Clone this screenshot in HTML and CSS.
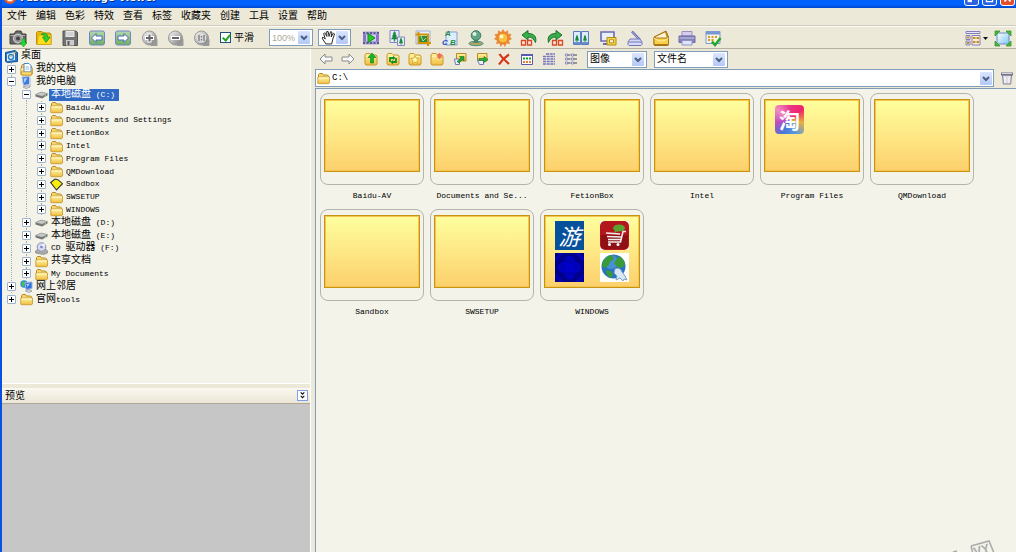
FILE: index.html
```html
<!DOCTYPE html>
<html lang="zh-CN">
<head>
    <meta charset="UTF-8">
    <meta name="viewport" content="width=device-width, initial-scale=1.0">
    <title>FastStone Image Viewer</title>
    <link rel="stylesheet" href="styles.css">
</head>
<body>
    <!-- shared icons -->
    <svg class="sprite" width="0" height="0" aria-hidden="true">
        <defs>
            <linearGradient id="gold" x1="0" y1="0" x2="0" y2="1"><stop offset="0" stop-color="#fff6a8"/><stop offset="1" stop-color="#f0bc3c"/></linearGradient>
            <linearGradient id="steel" x1="0" y1="0" x2="1" y2="1"><stop offset="0" stop-color="#fafafa"/><stop offset="1" stop-color="#777"/></linearGradient>
            <linearGradient id="sky" x1="0" y1="0" x2="1" y2="1"><stop offset="0" stop-color="#fff"/><stop offset="1" stop-color="#7cc8f4"/></linearGradient>
            <linearGradient id="leaf" x1="0" y1="0" x2="0" y2="1"><stop offset="0" stop-color="#b5d8b0"/><stop offset="1" stop-color="#6cae62"/></linearGradient>
        </defs>
        <symbol id="folder" viewBox="0 0 13 13">
            <path d="M1.500 10.500v-8l1-1h3l1 1.500h4l1 1v6.500z" fill="#f6d56c" stroke="#b98a24"/>
            <path d="M.8 11.500V5h11.700v6l-.8.7H1.500z" fill="url(#gold)" stroke="#c4952c" stroke-width=".8"/>
            <path d="M1.600 5.900H12" stroke="#fffbd8"/>
        </symbol>
        <symbol id="disk" viewBox="0 0 13 13">
            <path d="M.5 6.500 6 4l6.500 1.500v2L7 10.500.5 8.500z" fill="#737373"/>
            <path d="M.5 6.500 6 4l6.500 1.500L7 8.300z" fill="#c9c9c9" stroke="#888" stroke-width=".5"/>
            <path d="M9.500 8.300 11 7.600" stroke="#8f8"/>
        </symbol>
        <symbol id="chevron" viewBox="0 0 12 13">
            <path d="M3 5l3 3 3-3" fill="none" stroke="#4a6184" stroke-width="2"/>
        </symbol>
        <symbol id="tab-folder" viewBox="0 0 14 14">
            <path d="M1 12V3l1-1.500h4L7.500 3H12l1 1v8l-1 1H2z" fill="url(#gold)" stroke="#c9982c"/>
            <path d="M2 4.500h10" stroke="#fff3b0"/>
        </symbol>
        <symbol id="tree-pic" viewBox="0 0 8 12">
            <path d="M4 0 6 3H5l2 3H5.500L8 9H4.700v2.500H3.300V9H0l2.500-3H1l2-3H2z" fill="#1d8a3a"/>
        </symbol>
    </svg>

    <header class="titlebar">
        <svg class="app-icon" viewBox="0 0 12 12"><circle cx="6" cy="6" r="6" fill="#e05a28"/><circle cx="6" cy="6" r="3.500" fill="#fff"/><circle cx="6" cy="6" r="2" fill="#a03010"/></svg>
        <span class="app-title">FastStone Image Viewer</span>
        <span class="window-buttons">
            <button class="win-button" aria-label="最小化"><svg viewBox="0 0 15 15"><path d="M3 10.500h5" stroke="#fff" stroke-width="2.500"/></svg></button>
            <button class="win-button" aria-label="最大化"><svg viewBox="0 0 15 15"><path d="M4 3h7v8H4z" fill="none" stroke="#fff" stroke-width="1.500"/></svg></button>
            <button class="win-button close" aria-label="关闭"><svg viewBox="0 0 15 15"><path d="M4 3l7 8M11 3l-7 8" stroke="#fff" stroke-width="2"/></svg></button>
        </span>
    </header>

    <nav class="menubar">
        <button>文件</button>
        <button>编辑</button>
        <button>色彩</button>
        <button>特效</button>
        <button>查看</button>
        <button>标签</button>
        <button>收藏夹</button>
        <button>创建</button>
        <button>工具</button>
        <button>设置</button>
        <button>帮助</button>
    </nav>

    <div class="toolbar">
        <div class="group">
            <button class="tool" aria-label="获取照片"><svg viewBox="0 0 18 18"><path d="M1 5h4l2-3h5l1.500 3H17v10H1z" fill="#646464" stroke="#444"/><path d="M1.500 6.500H16" stroke="#aaa"/><circle cx="9" cy="9.500" r="4.500" fill="#999" stroke="#ddd"/><circle cx="9" cy="9.500" r="2" fill="#444"/><path d="M13 10h3v3.500h2L14.500 18 11 13.500h2z" fill="#1fdc2c" stroke="#169a20" stroke-width=".5"/></svg></button>
            <button class="tool" aria-label="打开"><svg viewBox="0 0 18 18"><path d="M1.500 15V3.500l1-1H7L8.500 4H15l1 1v10.500H2z" fill="#e9b90c" stroke="#b88d10"/><path d="M2 15.500 3.500 6H16v9.500z" fill="#ffdc1c" stroke="#d0a014" stroke-width=".7"/><path d="M6 5.500C9 3 12.500 4 12.500 8h2.700L11 13.500 7.500 8h2.300C10 6.500 8.500 5.500 6 5.500z" fill="#2fd12f" stroke="#148a1c" stroke-width=".7"/></svg></button>
            <button class="tool" aria-label="保存"><svg viewBox="0 0 18 18"><path d="M2 2h13l1.500 1.500V16.500H2z" fill="#737373" stroke="#555"/><path d="M4.500 2h9v6h-9z" fill="#e8e8e8"/><path d="M5.500 4h7M5.500 6h7" stroke="#bbb"/><path d="M5 11h8v5.500H5z" fill="#ccc"/><path d="M6.500 12h2v4h-2z" fill="#555"/></svg></button>
        </div>
        <div class="group">
            <button class="tool" aria-label="上一个"><svg viewBox="0 0 18 18"><rect x="1.500" y="2" width="15" height="14" rx="2" fill="url(#leaf)" stroke="#7284c8"/><path d="M3.500 9 8 4.500V7h6v4H8v2.500z" fill="#fff" stroke="#4a68b4"/></svg></button>
            <button class="tool" aria-label="下一个"><svg viewBox="0 0 18 18"><rect x="1.500" y="2" width="15" height="14" rx="2" fill="url(#leaf)" stroke="#7284c8"/><path d="M14.500 9 10 4.500V7H4v4h6v2.500z" fill="#fff" stroke="#4a68b4"/></svg></button>
        </div>
        <div class="group">
            <button class="tool" aria-label="放大"><svg viewBox="0 0 18 18"><path d="M10 16.500 16 10.500v6z" fill="#999" stroke="#999"/><circle cx="8.500" cy="9" r="7" fill="url(#steel)" stroke="#999"/><path d="M4 9h9M8.500 4.500v9" stroke="#fff" stroke-width="4"/><path d="M5 9h7M8.500 5.500v7" stroke="#666" stroke-width="2"/></svg></button>
            <button class="tool" aria-label="缩小"><svg viewBox="0 0 18 18"><path d="M10 16.500 16 10.500v6z" fill="#999" stroke="#999"/><circle cx="8.500" cy="9" r="7" fill="url(#steel)" stroke="#999"/><path d="M4 9h9" stroke="#fff" stroke-width="4"/><path d="M5 9h7" stroke="#666" stroke-width="2"/></svg></button>
            <button class="tool" aria-label="实际大小"><svg viewBox="0 0 18 18"><path d="M10 16.500 16 10.500v6z" fill="#999" stroke="#999"/><circle cx="8.500" cy="9" r="7" fill="url(#steel)" stroke="#999"/><circle cx="8.500" cy="9" r="4.800" fill="#ddd"/><path d="M6 6v6M11 6v6M8.500 7v1.500M8.500 10v1.500" stroke="#777" stroke-width="1.300"/></svg></button>
        </div>
        <label class="check"><input type="checkbox" checked>平滑</label>
        <div class="combo zoom">
            <select aria-label="缩放" disabled><option>100%</option></select>
            <svg class="arrow"><use href="#chevron"/></svg>
        </div>
        <button class="combo hand" aria-label="手形工具" aria-haspopup="menu">
            <svg class="hand-icon" viewBox="0 0 14 14"><path d="M4.500 13 1 7.500l1-1L4 8.500 2.500 3.500l1-1L5.500 6 5.300 1.500h1.400L7.500 6 9 1.500l1.200.5L9.500 6.500l2-3.500 1.200.7L11 8.500 10 13z" fill="#fff" stroke="#222" stroke-width=".9"/></svg>
            <svg class="arrow"><use href="#chevron"/></svg>
        </button>
        <div class="group first-action">
            <button class="tool" aria-label="幻灯片"><svg viewBox="0 0 18 18"><path d="M1 2.500h16v13H1z" fill="#a9a4dc"/><path d="M1 4h16M1 14h16" stroke="#5d5894" stroke-width="2" stroke-dasharray="2 1.500"/><path d="M1 6h16v6H1z" fill="#c6d2f0"/><path d="M1 5.500h3v7H1zM14 5.500h3v7h-3z" fill="#8e70c4"/><path d="M6 4.500 13 9l-7 4.500z" fill="#25c825" stroke="#188a20"/></svg></button>
            <button class="tool" aria-label="调整大小"><svg viewBox="0 0 18 18"><path d="M2 1.500h9v12H2z" fill="#e9eefc" stroke="#8585c8"/><use href="#tree-pic" x="2.500" y="2" width="8" height="11"/><path d="M9.500 8h7v8.500h-7z" fill="#e9eefc" stroke="#8585c8"/><use href="#tree-pic" x="10" y="8.500" width="6" height="7.500"/></svg></button>
            <button class="tool" aria-label="裁剪"><svg viewBox="0 0 18 18"><path d="M2 2h14v13H2z" fill="#e7edfc" stroke="#a7acd8"/><path d="M5 7h8v6H5z" fill="#2d8b38"/><path d="M7 7l2 5 3-3" stroke="#a6dfb0" fill="none"/><path d="M1.500 5.500H14V17M4.500 3v11H17" fill="none" stroke="#d09600" stroke-width="2"/></svg></button>
        </div>
        <div class="group">
            <button class="tool" aria-label="标注"><svg viewBox="0 0 18 18"><path d="M5 3h11v13H5z" fill="#dceefc" stroke="#8c9bd0"/><text class="glyph green" x="4" y="7">A</text><text class="glyph blue" x="1" y="16">C</text><text class="glyph green" x="9" y="16">B</text></svg></button>
            <button class="tool" aria-label="克隆"><svg viewBox="0 0 18 18"><ellipse cx="9" cy="14.500" rx="7" ry="2.200" fill="#b9a45c" stroke="#3c8f84"/><path d="M7.500 10h3l1.500 4H6z" fill="#438972"/><circle cx="9" cy="6.500" r="4.800" fill="#61a585" stroke="#397a64"/><circle cx="7.500" cy="5" r="2" fill="#dcefe5"/></svg></button>
        </div>
        <div class="group">
            <button class="tool" aria-label="亮度"><svg viewBox="0 0 18 18"><path d="M9 0l2 3 3-1.700.2 3.500 3.300.2L16 8l2 2-3 1.500 1 3.500-3.500-.5L11 18l-2-3-2.500 3-1-3.500L2 15l1-3.500L0 10l2-2L.5 5l3.300-.2L4 1.300 7 3z" fill="#ee8a3c"/><circle cx="9" cy="9" r="5" fill="#f9c03c" stroke="#dd8228"/><circle cx="7.500" cy="7.500" r="2" fill="#fff6c4"/></svg></button>
            <button class="tool" aria-label="向左旋转"><svg viewBox="0 0 18 18"><path d="M2 6l6-4.500v3c6 0 9 3 7.500 9C14 10 12 8 8 8v3z" fill="#38ad48" stroke="#177531"/><path d="M1.500 11.500h4v4.500h-4zM7.500 11.500h4v4.500h-4z" fill="#ffe5d5" stroke="#d64a25" stroke-width="1.300"/></svg></button>
            <button class="tool" aria-label="向右旋转"><svg viewBox="0 0 18 18"><path d="M16 6l-6-4.500v3c-6 0-9 3-7.500 9C4 10 6 8 10 8v3z" fill="#38ad48" stroke="#177531"/><path d="M6.500 11.500h4v4.500h-4zM12.500 11.500h4v4.500h-4z" fill="#ffe5d5" stroke="#d64a25" stroke-width="1.300"/></svg></button>
            <button class="tool" aria-label="比较"><svg viewBox="0 0 18 18"><path d="M1.500 2.500h7v13h-7zM9.500 2.500h7v13h-7z" fill="#dcecfc" stroke="#587cc0"/><path d="M2 13h6v2H2zM10 13h6v2h-6z" fill="#6d90cc"/><use href="#tree-pic" x="2.500" y="5" width="5" height="9"/><use href="#tree-pic" x="10.500" y="5" width="5" height="9"/></svg></button>
        </div>
        <div class="group">
            <button class="tool" aria-label="设为墙纸"><svg viewBox="0 0 18 18"><path d="M2 3h13v9H2z" fill="#e7f0fa" stroke="#6b69b4" stroke-width="1.600"/><path d="M4 15h7" stroke="#6b69b4" stroke-width="2"/><path d="M8 8.500h9v7.500H8z" fill="#f4d64e" stroke="#b58c0d"/><path d="M10.500 10.800h4v3h-4z" fill="#fff" stroke="#b58c0d"/></svg></button>
        </div>
        <div class="group">
            <button class="tool" aria-label="扫描"><svg viewBox="0 0 18 18"><path d="M6 2.500 14 11" stroke="#5e62ae" stroke-width="2.500"/><path d="M6.500 3 14 11" stroke="#b4b9ee"/><path d="M4 10h10l2 3v2.500l-1 1H3l-1-1V13z" fill="#d6d9f8" stroke="#7078b8"/><path d="M2.500 13h13" stroke="#7078b8"/></svg></button>
            <button class="tool" aria-label="电子邮件"><svg viewBox="0 0 18 18"><path d="M2 8 14 2l2.500 6v8l-1 .5H3L2 16z" fill="#c88d18" stroke="#a87012"/><path d="M3.500 8 13 3.500 15 9H4z" fill="#fff6d8"/><path d="M2 9h14.500v6.500H2z" fill="#f7cf48" stroke="#ad7915"/><path d="M2 9c5 4 10 4 14.500 0" fill="none" stroke="#fff0a5"/></svg></button>
            <button class="tool" aria-label="打印"><svg viewBox="0 0 18 18"><path d="M4 7V2.500h10V7z" fill="#d9ccee" stroke="#9a8fbe"/><path d="M1 7h16v6.500H1z" fill="#8584b8" stroke="#6c6aa4"/><path d="M1.500 9h15" stroke="#c7c8ec"/><path d="M4 11.500h10v4.500H4z" fill="#d7e8fb" stroke="#9c8bc8"/></svg></button>
            <button class="tool" aria-label="设置"><svg viewBox="0 0 18 18"><path d="M2 2.500h14v12H2z" fill="#f5f4e4" stroke="#7d9ad0"/><path d="M2 4h14" stroke="#7897d4" stroke-width="3"/><path d="M4 8h10M4 11h6" stroke="#d39b2a" stroke-width="2" stroke-dasharray="2 1.500"/><path d="M8 12.500l3 3.500L16.500 9" fill="none" stroke="#22a52a" stroke-width="2.500"/></svg></button>
        </div>
        <div class="group window-tools">
            <button class="tool wide" aria-label="布局"><svg viewBox="0 0 24 18"><path d="M2 2.500h14v2H2z" fill="#e5e8ff" stroke="#8382bf"/><path d="M2 6.500h4v4H2zM2 12h4v4H2zM8 6.500h8V16H8z" fill="#f4edd2" stroke="#8382bf"/><path d="M3 8.500h2M3 14h2M9 9h2.500M12.500 9H15M9 13h2.500M12.500 13H15" stroke="#cb8d22" stroke-width="2"/><path d="M19 8h5l-2.500 3z" fill="#111"/></svg></button>
            <button class="tool" aria-label="全屏"><svg viewBox="0 0 18 18"><path d="M3 4h12v11H3z" fill="url(#sky)" stroke="#668dc2"/><path d="M1 2h5L1 7zM17 2v5l-5-5zM1 17v-5l5 5zM17 17h-5l5-5z" fill="#49bd35" stroke="#2b8a23" stroke-width=".7"/></svg></button>
        </div>
    </div>

    <main class="workspace">
        <aside class="sidebar">
            <ul class="tree">
                <li class="root"><svg class="icon" viewBox="0 0 13 13"><path d="M.5 2.500 10 .5l2.500 2v9l-10 1-2-1z" fill="#2474c4" stroke="#175694"/><path d="M2 4l8-2v8l-8 1z" fill="#e9f6ff"/><circle cx="6" cy="7" r="2.500" fill="none" stroke="#2b83cc" stroke-width="1.400"/><path d="M5.500 7l6-6" stroke="#d3902d"/></svg><span class="label cn">桌面</span></li>
                <li><button class="toggle plus" aria-label="展开"></button><svg class="icon" viewBox="0 0 13 13"><use href="#folder" width="13" height="13"/><path d="M4 .5h5l2 2V9H4z" fill="#fff" stroke="#4d86cc"/><path d="M5.500 4H9M5.500 6H9" stroke="#8ab6e6"/><path d="M1 9h11l-.7 3.300H2z" fill="url(#gold)" stroke="#c4952c" stroke-width=".8"/></svg><span class="label cn">我的文档</span></li>
                <li><button class="toggle" aria-label="折叠"></button><svg class="icon" viewBox="0 0 13 13"><path d="M2 1 9.500.5 10 8 3.500 9.500z" fill="#3678e8" stroke="#b8bfcc"/><path d="M3.500 2.500l4-.5-3 5z" fill="#a8d3ff"/><path d="M9 1l2 .5v9l-2 1.500z" fill="#cdd0d8"/><path d="M3 11l5-1.500 2 1.500-4 1.500z" fill="#dde0e6" stroke="#7c828e" stroke-width=".6"/></svg><span class="label cn">我的电脑</span></li>
                <li class="level2"><button class="toggle" aria-label="折叠"></button><svg class="icon"><use href="#disk"/></svg><span class="label selected"><span class="cn">本地磁盘</span> (C:)</span></li>
                <li class="level3"><button class="toggle plus" aria-label="展开"></button><svg class="icon"><use href="#folder"/></svg><span class="label">Baidu-AV</span></li>
                <li class="level3"><button class="toggle plus" aria-label="展开"></button><svg class="icon"><use href="#folder"/></svg><span class="label">Documents and Settings</span></li>
                <li class="level3"><button class="toggle plus" aria-label="展开"></button><svg class="icon"><use href="#folder"/></svg><span class="label">FetionBox</span></li>
                <li class="level3"><button class="toggle plus" aria-label="展开"></button><svg class="icon"><use href="#folder"/></svg><span class="label">Intel</span></li>
                <li class="level3"><button class="toggle plus" aria-label="展开"></button><svg class="icon"><use href="#folder"/></svg><span class="label">Program Files</span></li>
                <li class="level3"><button class="toggle plus" aria-label="展开"></button><svg class="icon"><use href="#folder"/></svg><span class="label">QMDownload</span></li>
                <li class="level3"><button class="toggle plus" aria-label="展开"></button><svg class="icon" viewBox="0 0 13 13"><path d="M.7 4.500 5 1l3 .7 4.500 4L6.500 12z" fill="#f8ee0c" stroke="#333" stroke-width="1.100"/></svg><span class="label">Sandbox</span></li>
                <li class="level3"><button class="toggle plus" aria-label="展开"></button><svg class="icon"><use href="#folder"/></svg><span class="label">SWSETUP</span></li>
                <li class="level3"><button class="toggle plus" aria-label="展开"></button><svg class="icon"><use href="#folder"/></svg><span class="label">WINDOWS</span></li>
                <li class="level2"><button class="toggle plus" aria-label="展开"></button><svg class="icon"><use href="#disk"/></svg><span class="label"><span class="cn">本地磁盘</span> (D:)</span></li>
                <li class="level2"><button class="toggle plus" aria-label="展开"></button><svg class="icon"><use href="#disk"/></svg><span class="label"><span class="cn">本地磁盘</span> (E:)</span></li>
                <li class="level2"><button class="toggle plus" aria-label="展开"></button><svg class="icon" viewBox="0 0 13 13"><path d="M.5 9l3-2h7l2 2v2l-4 1.500-8-1.500z" fill="#aaa" stroke="#777" stroke-width=".6"/><circle cx="6.500" cy="5" r="4.300" fill="#d7dcf4" stroke="#8b8fae"/><path d="M6.500 5 9.500 2" stroke="#fff" stroke-width="1.500"/><circle cx="6.500" cy="5" r="1.300" fill="#7983b8"/></svg><span class="label">CD <span class="cn">驱动器</span> (F:)</span></li>
                <li class="level2"><button class="toggle plus" aria-label="展开"></button><svg class="icon"><use href="#folder"/></svg><span class="label cn">共享文档</span></li>
                <li class="level2"><button class="toggle plus" aria-label="展开"></button><svg class="icon"><use href="#folder"/></svg><span class="label">My Documents</span></li>
                <li><button class="toggle plus" aria-label="展开"></button><svg class="icon" viewBox="0 0 13 13"><circle cx="4" cy="4" r="3.700" fill="#2f8ed4"/><path d="M1 3l3-2 1 3-2 3z" fill="#4bbf4f"/><path d="M5 2.500 12 2v6.500l-6 1z" fill="#2e6ee0" stroke="#9fb4d8"/><path d="M6.500 4 10 3.500 7.500 7z" fill="#a9d5ff"/><path d="M5.500 11 9 9.500l3 1.500-3 1.500z" fill="#d5d8e2" stroke="#7c828e" stroke-width=".6"/></svg><span class="label cn">网上邻居</span></li>
                <li class="last"><button class="toggle plus" aria-label="展开"></button><svg class="icon"><use href="#folder"/></svg><span class="label"><span class="cn">官网</span>tools</span></li>
            </ul>
            <section class="preview">
                <div class="preview-header">
                    <h2>预览</h2>
                    <button class="collapse" aria-label="隐藏预览"><svg viewBox="0 0 10 10"><path d="M3 1.500l2 2 2-2M3 5.500l2 2 2-2" fill="none" stroke="#111" stroke-width="1.300"/></svg></button>
                </div>
                <div class="preview-area"></div>
            </section>
        </aside>

        <section class="browser">
            <div class="browser-toolbar">
                <div class="small-group">
                    <button class="small-tool" aria-label="后退"><svg viewBox="0 0 14 14"><path d="M1 7 6 2V5h7v4H6v3z" fill="#f8f8f8" stroke="#8c8c8c"/></svg></button>
                    <button class="small-tool" aria-label="前进"><svg viewBox="0 0 14 14"><path d="M13 7 8 2V5H1v4h7v3z" fill="#f8f8f8" stroke="#8c8c8c"/></svg></button>
                </div>
                <div class="small-group">
                    <button class="small-tool" aria-label="向上"><svg viewBox="0 0 14 14"><use href="#tab-folder"/><path d="M8 1l4 4.500H9.500V11h-3V5.500H4z" fill="#18b526" stroke="#0c7f1a" stroke-width=".6"/></svg></button>
                    <button class="small-tool" aria-label="刷新"><svg viewBox="0 0 14 14"><use href="#tab-folder"/><path d="M4 10V6h4M10 6v4H6" fill="none" stroke="#188f2a" stroke-width="1.800"/><path d="M7 3.500 9.500 6 7 8zM7 8v4.500L4.500 10z" fill="#188f2a"/></svg></button>
                    <button class="small-tool" aria-label="收藏"><svg viewBox="0 0 14 14"><use href="#tab-folder"/><path d="M7 3.500l1.200 2.700 2.800.3-2 2 .6 3L7 10l-2.600 1.500.6-3-2-2 2.800-.3z" fill="#fffcb0" stroke="#cf9d1d" stroke-width=".8"/></svg></button>
                    <button class="small-tool" aria-label="新建文件夹"><svg viewBox="0 0 14 14"><use href="#tab-folder"/><path d="M9.500 1v6M6.500 4h6M7.500 2l4 4M11.500 2l-4 4" stroke="#f06a50" stroke-width="1.100"/></svg></button>
                </div>
                <div class="small-group">
                    <button class="small-tool" aria-label="复制到"><svg viewBox="0 0 14 14"><path d="M3.500 1.500h9.500V9H3.500z" fill="url(#gold)" stroke="#b98a24"/><path d="M1.500 7h5v5.500h-4z" fill="#eef0ff" stroke="#7375b6"/><path d="M4 9.500 8 6 6.500 4.500H11V9L9.500 7.500 6 11z" fill="#24a532" stroke="#12701e" stroke-width=".6"/></svg></button>
                    <button class="small-tool" aria-label="移动到"><svg viewBox="0 0 14 14"><path d="M2.500 1.500H12V9H2.500z" fill="url(#gold)" stroke="#b98a24"/><path d="M2.500 8h6v4.500h-4z" fill="#eef0ff" stroke="#7375b6"/><path d="M4 6.500h5v-2L13 7.500 9 10.500v-2H4z" fill="#24b532" stroke="#12701e" stroke-width=".6"/></svg></button>
                    <button class="small-tool" aria-label="删除"><svg viewBox="0 0 14 14"><path d="M2.500 2c2 3 5 6 9.500 10M12 2.500C8 5 5 8 2 12.500" fill="none" stroke="#d53418" stroke-width="2.200"/></svg></button>
                </div>
                <div class="small-group">
                    <button class="small-tool" aria-label="缩略图"><svg viewBox="0 0 14 14"><path d="M1.500 2.500h11v10h-11z" fill="#fff" stroke="#5d5bb0"/><path d="M1 3h12" stroke="#5d5bb0" stroke-width="2"/><path d="M3 6.500h8.500" stroke="#159b2c" stroke-width="2" stroke-dasharray="2 1"/><path d="M3 10h8.500" stroke="#f27b2c" stroke-width="2" stroke-dasharray="2 1"/></svg></button>
                    <button class="small-tool" aria-label="详细信息"><svg viewBox="0 0 14 14"><path d="M4 2h9M1 4.500h12M1 7h12M1 9.500h12M1 12h12" stroke="#7472bd" stroke-width="1.300" stroke-dasharray="3 .7"/></svg></button>
                    <button class="small-tool" aria-label="列表"><svg viewBox="0 0 14 14"><path d="M4 3h2.500M10 3h3M4 7h2.500M10 7h3M4 11h2.500M10 11h3" stroke="#444"/><path d="M1.500 2h2v2h-2zM7.500 2h2v2h-2zM1.500 6h2v2h-2zM7.500 6h2v2h-2zM1.500 10h2v2h-2zM7.500 10h2v2h-2z" fill="#fff" stroke="#7472bd" stroke-width=".8"/></svg></button>
                </div>
                <div class="combo filter">
                    <select aria-label="文件类型"><option>图像</option></select>
                    <svg class="arrow"><use href="#chevron"/></svg>
                </div>
                <div class="combo sort">
                    <select aria-label="排序方式"><option>文件名</option></select>
                    <svg class="arrow"><use href="#chevron"/></svg>
                </div>
            </div>

            <div class="address-row">
                <div class="address">
                    <svg class="icon"><use href="#folder"/></svg>
                    <input type="text" value="C:\" aria-label="地址">
                    <button class="address-drop" aria-label="历史"><svg class="arrow"><use href="#chevron"/></svg></button>
                </div>
                <button class="trash" aria-label="回收站"><svg viewBox="0 0 14 14"><path d="M2.500 4l.8 9h7.400l.8-9z" fill="#dddbe6" stroke="#84809c"/><path d="M5 5.500V12M9 5.500V12" stroke="#fff"/><path d="M1 1.500h12v3H1z" fill="#77738a"/><path d="M2 2.500h10" stroke="#d8d6e6"/></svg></button>
            </div>

            <div class="files">
                <figure class="file"><div class="card"><div class="thumb"></div></div><figcaption>Baidu-AV</figcaption></figure>
                <figure class="file"><div class="card"><div class="thumb"></div></div><figcaption>Documents and Se...</figcaption></figure>
                <figure class="file"><div class="card"><div class="thumb"></div></div><figcaption>FetionBox</figcaption></figure>
                <figure class="file"><div class="card"><div class="thumb"></div></div><figcaption>Intel</figcaption></figure>
                <figure class="file">
                    <div class="card"><div class="thumb"><span class="pic taobao">淘</span></div></div>
                    <figcaption>Program Files</figcaption>
                </figure>
                <figure class="file"><div class="card"><div class="thumb"></div></div><figcaption>QMDownload</figcaption></figure>
                <figure class="file"><div class="card"><div class="thumb"></div></div><figcaption>Sandbox</figcaption></figure>
                <figure class="file"><div class="card"><div class="thumb"></div></div><figcaption>SWSETUP</figcaption></figure>
                <figure class="file">
                    <div class="card"><div class="thumb">
                        <span class="pic game">游</span>
                        <svg class="pic" viewBox="0 0 29 29"><path d="M0 0h29v29H0z" fill="#fff"/><rect width="29" height="29" rx="5" fill="#b3161c"/><path d="M1 14h27v10q0 4-4 4H5q-4 0-4-4z" fill="#8f1015"/><ellipse cx="19" cy="7" rx="6" ry="3.500" fill="#58a530"/><path d="M15 9l-1 3 4-2z" fill="#58a530"/><path d="M6 12l14 1M7 15.500l14 .5M8 18.500h13M26 10.500h-3L20.500 21H8" fill="none" stroke="#eee" stroke-width="1.600"/><circle cx="9.500" cy="23.500" r="1.500" fill="#fff"/><circle cx="18" cy="23.500" r="1.500" fill="#fff"/></svg>
                        <svg class="pic" viewBox="0 0 29 29"><path d="M0 0h29v29H0z" fill="#00008a"/><g fill="#0000b4" stroke="#0000e0"><circle cx="14.500" cy="8" r="4.500"/><circle cx="14.500" cy="21" r="4.500"/><circle cx="8" cy="14.500" r="4.500"/><circle cx="21" cy="14.500" r="4.500"/><circle cx="14.500" cy="14.500" r="3.500"/></g><path d="M0 7 7 0M22 0l7 7M0 22l7 7M29 22l-7 7M14.500 12v5M12 14.500h5" stroke="#0000d4" stroke-width="1.500"/></svg>
                        <svg class="pic" viewBox="0 0 29 29"><path d="M0 0h29v29H0z" fill="#fff"/><circle cx="13.500" cy="13.500" r="12" fill="#2874c2"/><circle cx="11" cy="9" r="7" fill="#5ba3e0" opacity=".6"/><path d="M3 8c3-4 6-6 9-6l2 4-4 3-2 4-4 2-2-2zM14 10l5-7c4 2 6 6 6 9l-4 3-4-1zM6 17l5 1 2 4-2 3c-3-1-5-4-5-8z" fill="#3b9b38"/><path d="M15 16c3-2 6 0 7 3l3 4 2 4-3-1-1 2-3-3-4 2 1-4-3-3z" fill="#d9e8f6" stroke="#7f9fc2"/></svg>
                    </div></div>
                    <figcaption>WINDOWS</figcaption>
                </figure>
            </div>
            <svg class="stamp" viewBox="0 0 46 12"><path d="M1 12l4-1M19 6l18-5 5 12M19 6l2 8" fill="none" stroke="#aaa" stroke-width="1.500"/><text x="23" y="16" transform="rotate(-17 23 16)">VY</text></svg>
        </section>
    </main>
</body>
</html>
```

FILE: styles.css
```css
* {
    box-sizing: border-box;
}
body {
    margin: 0;
    height: 100vh;
    display: flex;
    flex-direction: column;
    overflow: hidden;
    border-left: 2px solid #0a50e0;
    background-color: #ece9d8;
    color: #000;
    font-family: "Liberation Sans", "Noto Sans CJK SC", sans-serif;
    font-size: 10px;
    line-height: 12px;
}
button, select, input {
    font: inherit;
    color: inherit;
}
button {
    padding: 0;
    border: none;
    background: none;
}
svg {
    display: block;
    flex-shrink: 0;
}
.sprite {
    position: absolute;
}

/* ---------- title bar ---------- */
.titlebar {
    display: flex;
    align-items: flex-end;
    flex-shrink: 0;
    height: 8px;
    padding: 0 1px 4px 2px;
    overflow: hidden;
    background: linear-gradient(#0061fc 60%, #0046c8);
    color: #fff;
}
.app-icon {
    width: 12px;
    height: 12px;
}
.app-title {
    padding-left: 4px;
    font-family: "DejaVu Sans", sans-serif;
    font-size: 10px;
    font-weight: bold;
    line-height: 12px;
    text-shadow: 1px 1px #0a2a80;
}
.window-buttons {
    display: flex;
    gap: 3px;
    margin-left: auto;
    margin-bottom: -2px;
}
.win-button {
    width: 15px;
    height: 15px;
    border: 1px solid #fff;
    border-radius: 3px;
    background-color: #2a62e0;
}
.close {
    background-color: #e0502c;
}

/* ---------- menu and toolbar ---------- */
.menubar {
    display: flex;
    flex-shrink: 0;
    gap: 9px;
    height: 18px;
    padding: 0 5px 1px;
    border-bottom: 1px solid #cfccbe;
}
.toolbar {
    display: flex;
    align-items: center;
    flex-shrink: 0;
    gap: 9px;
    height: 23px;
    padding: 0 4px 0 7px;
    border-top: 1px solid #fbfaf5;
    border-bottom: 1px solid #b4b1a2;
}
.group {
    display: flex;
    gap: 8px;
}
.tool {
    width: 18px;
    height: 18px;
}
.wide {
    width: 24px;
}
.tool svg, .small-tool svg {
    width: 100%;
    height: 100%;
}
.glyph {
    font-size: 8px;
    font-weight: bold;
    font-style: italic;
}
.green {
    fill: #218c3a;
}
.blue {
    fill: #2649c4;
}
.check {
    display: flex;
    align-items: center;
    gap: 3px;
}
.check input {
    appearance: none;
    width: 11px;
    height: 11px;
    margin: 0;
    border: 1px solid #1c5180;
    background-color: #fff;
}
.check input:checked::before {
    content: "";
    display: block;
    width: 3px;
    height: 6px;
    margin-left: 3px;
    border: solid #21a121;
    border-width: 0 2px 2px 0;
    transform: rotate(40deg);
}
.combo {
    display: grid;
    grid-template-columns: 1fr 14px;
    align-items: center;
    height: 17px;
    border: 1px solid #7f9db9;
    background-color: #fff;
}
.combo select {
    grid-area: 1 / 1 / 2 / 3;
    appearance: none;
    width: 100%;
    height: 15px;
    padding: 0 2px;
    border: none;
    border-radius: 0;
    background: none;
    opacity: 1;
}
.arrow {
    grid-area: 1 / 2;
    width: 12px;
    height: 13px;
    border-radius: 1px;
    background: linear-gradient(#dbe5fe, #b4c8f6);
    pointer-events: none;
}
.zoom {
    width: 44px;
    margin-left: 6px;
}
.combo.zoom select {
    color: #aca899;
    font-size: 9px;
}
.hand {
    width: 33px;
    margin-left: -4px;
}
.hand-icon {
    width: 15px;
    height: 15px;
    margin-left: 2px;
}
.first-action {
    margin-left: 2px;
}
.window-tools {
    gap: 6px;
    margin-left: auto;
}

/* ---------- folder tree ---------- */
.workspace {
    flex: 1;
    display: flex;
    gap: 4px;
    min-height: 0;
}
.sidebar {
    display: flex;
    flex-direction: column;
    gap: 4px;
    width: 309px;
    border-right: 1px solid #fff;
}
.tree {
    flex: 1;
    display: grid;
    grid-template-rows: repeat(20, minmax(0, 1fr));
    min-height: 0;
    margin: 0;
    padding: 1px 0 77px;
    border-bottom: 1px solid #fff;
    background-color: #f3f3ea;
    list-style: none;
    font-family: "Liberation Mono", "Noto Sans CJK SC", monospace;
    font-size: 8px;
}
.tree li {
    display: flex;
    align-items: center;
    padding-left: 5px;
    background-image: linear-gradient(#aaa 50%, transparent 50%);
    background-size: 1px 2px;
    background-repeat: repeat-y;
    background-position: 9px 0;
}
.tree .root {
    padding-left: 3px;
    background-image: none;
}
.tree .level2 {
    padding-left: 20px;
    background-image: linear-gradient(#aaa 50%, transparent 50%), linear-gradient(#aaa 50%, transparent 50%);
    background-position: 9px 0, 24px 0;
}
.tree .level3 {
    padding-left: 35px;
    background-image: linear-gradient(#aaa 50%, transparent 50%), linear-gradient(#aaa 50%, transparent 50%), linear-gradient(#aaa 50%, transparent 50%);
    background-position: 9px 0, 24px 0, 39px 0;
}
.tree .last {
    background-image: none;
}
.toggle {
    flex-shrink: 0;
    width: 9px;
    height: 9px;
    margin-right: 4px;
    border: 1px solid #9db3cc;
    border-radius: 1px;
    background: linear-gradient(#000, #000) center / 5px 1px no-repeat #fff;
}
.plus {
    background: linear-gradient(#000, #000) center / 5px 1px no-repeat, linear-gradient(#000, #000) center / 1px 5px no-repeat #fff;
}
.icon {
    width: 13px;
    height: 13px;
}
.label {
    padding: 0 2px;
    margin-left: 1px;
    line-height: 12px;
    white-space: pre;
}
.cn {
    font-size: 10px;
    line-height: 12px;
}
.selected {
    padding-right: 4px;
    background-color: #316ac5;
    color: #fff;
}

/* ---------- preview ---------- */
.preview {
    display: flex;
    flex-direction: column;
    height: 164px;
}
.preview-header {
    display: flex;
    align-items: center;
    justify-content: space-between;
    height: 16px;
    padding: 0 2px 0 3px;
    border-bottom: 1px solid #b0a596;
    background: linear-gradient(#faf8f0, #ebe7d6);
}
.preview-header h2 {
    margin: 0;
    font-size: 10px;
    font-weight: normal;
}
.collapse {
    width: 11px;
    height: 11px;
    border: 1px solid #7f9fe4;
    background-color: #fff;
}
.preview-area {
    flex: 1;
    background-color: #c6c6c6;
}

/* ---------- file browser ---------- */
.browser {
    flex: 1;
    display: flex;
    flex-direction: column;
    min-width: 0;
    position: relative;
}
.browser-toolbar {
    display: flex;
    align-items: center;
    gap: 9px;
    height: 20px;
    padding-left: 4px;
}
.small-group {
    display: flex;
    gap: 8px;
}
.small-tool {
    width: 14px;
    height: 14px;
}
.filter {
    width: 60px;
}
.sort {
    width: 74px;
    margin-left: -2px;
}
.address-row {
    display: flex;
    align-items: center;
    gap: 6px;
    height: 18px;
    padding-right: 2px;
}
.address {
    flex: 1;
    display: flex;
    align-items: center;
    height: 18px;
    padding: 0 1px;
    border: 1px solid #7f9db9;
    background-color: #fff;
}
.address input {
    flex: 1;
    min-width: 0;
    height: 14px;
    padding: 0 2px;
    border: none;
    background: none;
    font-family: "Liberation Mono", monospace;
    font-size: 9px;
}
.trash svg {
    width: 14px;
    height: 14px;
}
.files {
    flex: 1;
    display: grid;
    grid-template-columns: repeat(auto-fill, 104px);
    align-content: start;
    gap: 12px 6px;
    min-height: 0;
    margin-top: 1px;
    padding: 4px;
    border: solid #7f9db9;
    border-width: 1px 0 0 1px;
    background-color: #f3f3ea;
}
.file {
    margin: 0;
}
.card {
    height: 92px;
    padding: 5px 3px;
    border: 1px solid #b4b4ae;
    border-radius: 8px;
}
.thumb {
    display: grid;
    grid-template-columns: 29px 29px;
    align-content: start;
    gap: 3px 16px;
    height: 73px;
    padding: 5px 10px;
    border: 1px solid #c8930f;
    background: linear-gradient(#ffff9e, #fcd06c);
    box-shadow: inset 0 0 0 1px #f4c552;
}
.pic {
    width: 29px;
    height: 29px;
    color: #fff;
    text-align: center;
}
.game {
    background-color: #07519c;
    font-family: "Noto Sans CJK SC", sans-serif;
    font-size: 22px;
    font-style: italic;
    line-height: 28px;
}
.taobao {
    border-radius: 4px;
    background: conic-gradient(#e8388c, #f0246c, #e8b040, #5a9ae0, #4878d8, #c04cc0, #f08cc0, #e8388c);
    font-family: "Noto Sans CJK SC", sans-serif;
    font-size: 21px;
    font-weight: bold;
    line-height: 28px;
}
.file figcaption {
    height: 12px;
    font-family: "Liberation Mono", monospace;
    font-size: 8px;
    line-height: 22px;
    text-align: center;
    white-space: nowrap;
}
.stamp {
    position: absolute;
    right: 18px;
    bottom: 0;
    width: 46px;
    height: 12px;
}
.stamp text {
    fill: #aaa;
    font-size: 12px;
    font-weight: bold;
}
```
